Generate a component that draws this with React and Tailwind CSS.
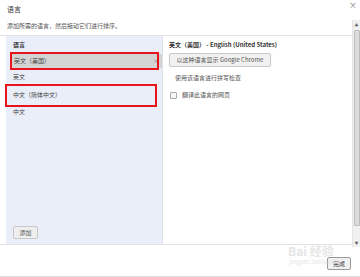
import React from "react";

const font = { fontFamily: '"Noto Sans CJK SC", "Noto Sans", sans-serif' };

const LangRow = ({ children, selected }) => (
  <div
    className={`h-[14px] flex items-center justify-between pl-[4px] pr-[3px] ${
      selected ? "bg-[#d4d4d4] ml-[4px]" : ""
    }`}
  >
    <span>{children}</span>
    {selected && <span className="text-[6px] text-[#888]">×</span>}
  </div>
);

const App = () => {
  return (
    <div
      className="relative w-[360px] h-[277px] bg-white overflow-hidden text-[6px] leading-[8px] text-[#444]"
      style={font}
    >
      <div className="pr-[8px]">
        <div className="h-[18px] pl-[7px] pt-[5px] text-[7px] text-[#333]">语言</div>
        <div className="h-[17px] pl-[7px] pt-[4px] text-[#555]">
          添加所需的语言，然后拖动它们进行排序。
        </div>

        <div className="flex h-[210px] border-y border-[#e2e2e2]">
          <div className="ml-[6px] w-[157px] bg-[#e9eef9] flex flex-col border-r border-[#dde1ea]">
            <div className="h-[18px] pl-[7px] pt-[5px] font-bold text-[#333]">语言</div>
            <div className="relative">
              <LangRow selected>英文（美国）</LangRow>
              <div className="absolute left-[4px] top-[-2px] w-[149px] h-[18px] border-2 border-[#e8141c]" />
            </div>
            <div className="h-[17px] pl-[7px] pt-[5px]">英文</div>
            <div className="relative h-[18px] pl-[7px] pt-[6px]">
              中文（简体中文）
              <div className="absolute left-[-1px] top-[-1px] w-[152px] h-[23px] border-2 border-[#e8141c]" />
            </div>
            <div className="h-[18px] pl-[7px] pt-[5px]">中文</div>
            <div className="flex-1" />
            <div className="pl-[7px] pb-[5px]">
              <div className="w-[25px] h-[13px] flex items-center justify-center bg-[#eeeeee] border border-[#c8c8c8] rounded-[2px] text-[#555]">
                添加
              </div>
            </div>
          </div>

          <div className="flex-1 pl-[6px] pt-[5px]">
            <div className="font-bold text-[#333]">英文（美国） - English (United States)</div>
            <div className="mt-[4px] w-[102px] h-[14px] flex items-center justify-center bg-[#f1f1f1] border border-[#c8c8c8] rounded-[2px] text-[#555]">
              以这种语言显示 Google Chrome
            </div>
            <div className="mt-[7px] pl-[6px] text-[#555]">使用该语言进行拼写检查</div>
            <div className="mt-[9px] pl-[1px] flex items-center gap-[5px] text-[#555]">
              <span className="w-[7px] h-[7px] border border-[#aaa] rounded-[1px] bg-[#f6f6f6]" />
              翻译此语言的网页
            </div>
          </div>
        </div>

        <div className="h-[31px] flex items-center justify-end pr-[1px]">
          <div className="w-[24px] h-[13px] mt-[6px] flex items-center justify-center bg-[#f0f0f0] border border-[#9a9a9a] rounded-[2px] text-[#333]">
            完成
          </div>
        </div>
      </div>
      <div className="border-t border-[#dcdcdc]" />

      {/* close */}
      <div className="absolute left-[349px] top-[1px] text-[8px] text-[#777]">×</div>

      {/* scrollbar */}
      <div className="absolute left-[352px] top-[20px] w-[8px] h-[227px] bg-[#f0f0f0] border-l border-[#e4e4e4] flex flex-col items-center">
        <span className="mt-[3px] text-[4px] text-[#666] leading-[4px]">▲</span>
        <div className="mt-[3px] w-[6px] h-[196px] bg-[#dcdcdc] border border-[#bdbdbd] rounded-[1px]" />
        <div className="flex-1" />
        <span className="mb-[2px] text-[4px] text-[#666] leading-[4px]">▼</span>
      </div>

      {/* watermark */}
      <div className="absolute left-[288px] top-[244px] text-[#e6e6e6] pointer-events-none">
        <div className="text-[12px] leading-[14px] font-bold">Bai 经验</div>
        <div className="text-[6px] leading-[7px] pl-[1px]">jingyan.baidu.com</div>
      </div>
    </div>
  );
};

export default App;
